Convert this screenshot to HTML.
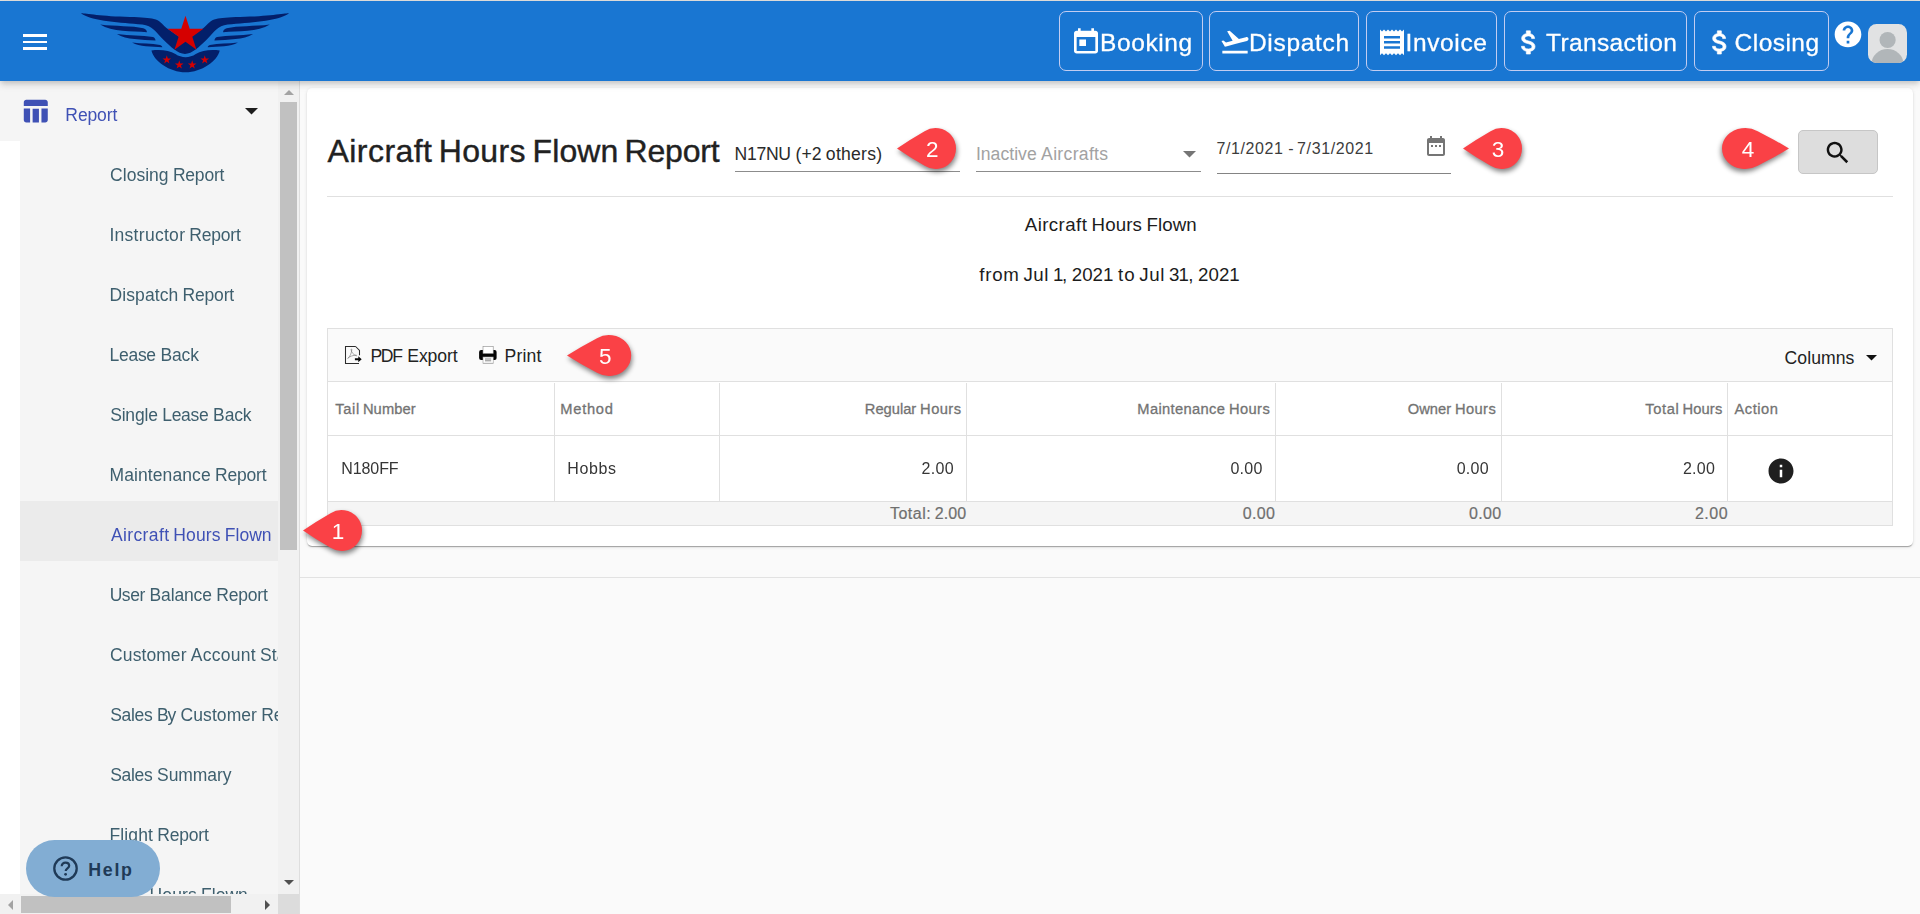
<!DOCTYPE html>
<html lang="en"><head><meta charset="utf-8"><title>Aircraft Hours Flown Report</title>
<style>
html,body{margin:0;padding:0}
body{width:1920px;height:914px;overflow:hidden;position:relative;background:#fafafa;font-family:"Liberation Sans",Arial,sans-serif;}
.a{position:absolute}
.t{position:absolute;white-space:nowrap;display:block}
svg{position:absolute;overflow:visible}
#hdr{left:0;top:1px;width:1920px;height:80px;background:#1976d2;box-shadow:0 2.5px 5px -1px rgba(0,0,0,.12),0 5px 6px 0 rgba(0,0,0,.08),0 1px 12px 0 rgba(0,0,0,.08);z-index:5}
.nb{position:absolute;top:10px;height:58px;border:1px solid #c3cdf1;border-radius:7px}
#side{left:0;top:81px;width:299px;height:833px;background:#f5f5f5;border-right:1px solid #dedede;overflow:hidden;z-index:2}
#card{left:307px;top:88px;width:1606px;height:458px;background:#fff;border-radius:5px;box-shadow:0 1.6px 1px -1px rgba(0,0,0,.2),0 1px 1px 0 rgba(0,0,0,.13),0 1px 3.5px 0 rgba(0,0,0,.12)}
.ul{position:absolute;height:1px;background:#8c8c8c}
.vl{position:absolute;width:1px;background:#e0e0e0;top:383px;height:118px}
</style></head><body>
<div class="a" style="left:0;top:0;width:1920px;height:1px;background:#e4e2df"></div>

<div class="a" style="left:300px;top:577px;width:1620px;height:1px;background:#e2e2e2"></div>
<div id="card" class="a"></div>
<span class="t" style="left:327.54px;top:133px;font-size:32.00px;line-height:36px;color:#212121;letter-spacing:0.442px;-webkit-text-stroke:0.40px #212121;">Aircraft</span> <span class="t" style="left:438.78px;top:133px;font-size:32.00px;line-height:36px;color:#212121;letter-spacing:0.313px;-webkit-text-stroke:0.40px #212121;">Hours</span> <span class="t" style="left:532.58px;top:133px;font-size:32.00px;line-height:36px;color:#212121;letter-spacing:0.094px;-webkit-text-stroke:0.40px #212121;">Flown</span> <span class="t" style="left:624.58px;top:133px;font-size:32.00px;line-height:36px;color:#212121;letter-spacing:-0.203px;-webkit-text-stroke:0.40px #212121;">Report</span>
<span class="t" style="left:734.56px;top:144px;font-size:17.60px;line-height:20px;color:#2a2a2a;letter-spacing:-0.292px;">N17NU</span> <span class="t" style="left:795.49px;top:144px;font-size:17.60px;line-height:20px;color:#2a2a2a;letter-spacing:0.034px;">(+2</span> <span class="t" style="left:825.87px;top:144px;font-size:17.60px;line-height:20px;color:#2a2a2a;letter-spacing:0.241px;">others)</span>
<div class="ul" style="left:735px;top:171px;width:225px"></div>
<span class="t" style="left:975.88px;top:144px;font-size:17.60px;line-height:20px;color:#a2a2a2;letter-spacing:0.030px;">Inactive</span> <span class="t" style="left:1041.08px;top:144px;font-size:17.60px;line-height:20px;color:#a2a2a2;letter-spacing:0.315px;">Aircrafts</span>
<div class="ul" style="left:976px;top:171px;width:225px"></div>
<svg style="left:1183px;top:151px" width="13" height="6.5" viewBox="0 0 12 6"><path d="M0 0h12L6 6z" fill="#757575"/></svg>
<span class="t" style="left:1216.48px;top:140px;font-size:16.00px;line-height:17px;color:#3c3c3c;letter-spacing:0.602px;">7/1/2021</span> <span class="t" style="left:1288.30px;top:140px;font-size:16.00px;line-height:17px;color:#3c3c3c;">-</span> <span class="t" style="left:1297.08px;top:140px;font-size:16.00px;line-height:17px;color:#3c3c3c;letter-spacing:0.613px;">7/31/2021</span>
<div class="ul" style="left:1217px;top:172.5px;width:234px;height:1.25px;background:#848484"></div>
<svg style="left:1424px;top:134.25px" width="24" height="24" viewBox="0 0 24 24"><path fill="#757575" d="M9 11H7v2h2v-2zm4 0h-2v2h2v-2zm4 0h-2v2h2v-2zm2-7h-1V2h-2v2H8V2H6v2H5c-1.11 0-1.99.9-1.99 2L3 20c0 1.1.89 2 2 2h14c1.1 0 2-.9 2-2V6c0-1.1-.9-2-2-2zm0 16H5V9h14v11z"/></svg>
<div class="a" style="left:1798px;top:130px;width:78px;height:42px;background:#dddddd;border:1px solid #c6c6c6;border-radius:5px"></div>
<svg style="left:1822.8px;top:138.3px" width="29.5" height="29.5" viewBox="0 0 24 24"><path fill="#111" d="M15.5 14h-.79l-.28-.27C15.41 12.59 16 11.11 16 9.5 16 5.91 13.09 3 9.5 3S3 5.910 3 9.5 5.91 16 9.5 16c1.61 0 3.09-.59 4.23-1.57l.27.28v.79l5 4.99L20.49 19l-4.99-5zm-6 0C7.01 14 5 11.99 5 9.5S7.01 5 9.5 5 14 7.01 14 9.5 11.990 14 9.5 14z"/></svg>
<div class="a" style="left:327px;top:196px;width:1566px;height:1px;background:#e0e0e0"></div>
<span class="t" style="left:1024.76px;top:214px;font-size:18.70px;line-height:21px;color:#1c1c1c;letter-spacing:0.413px;">Aircraft</span> <span class="t" style="left:1091.52px;top:214px;font-size:18.70px;line-height:21px;color:#1c1c1c;letter-spacing:0.130px;">Hours</span> <span class="t" style="left:1146.57px;top:214px;font-size:18.70px;line-height:21px;color:#1c1c1c;letter-spacing:0.038px;">Flown</span>
<span class="t" style="left:979.24px;top:264px;font-size:18.70px;line-height:21px;color:#1c1c1c;letter-spacing:0.743px;">from</span> <span class="t" style="left:1023.46px;top:264px;font-size:18.70px;line-height:21px;color:#1c1c1c;letter-spacing:0.555px;">Jul</span> <span class="t" style="left:1053.06px;top:264px;font-size:18.70px;line-height:21px;color:#1c1c1c;letter-spacing:-1.495px;">1,</span> <span class="t" style="left:1071.74px;top:264px;font-size:18.70px;line-height:21px;color:#1c1c1c;letter-spacing:0.049px;">2021</span> <span class="t" style="left:1118.08px;top:264px;font-size:18.70px;line-height:21px;color:#1c1c1c;letter-spacing:1.078px;">to</span> <span class="t" style="left:1139.35px;top:264px;font-size:18.70px;line-height:21px;color:#1c1c1c;letter-spacing:0.555px;">Jul</span> <span class="t" style="left:1168.95px;top:264px;font-size:18.70px;line-height:21px;color:#1c1c1c;letter-spacing:-0.733px;">31,</span> <span class="t" style="left:1198.06px;top:264px;font-size:18.70px;line-height:21px;color:#1c1c1c;letter-spacing:0.049px;">2021</span>
<div class="a" style="left:327px;top:328px;width:1564px;height:196px;border:1px solid #e0e0e0;background:#fff"></div>
<div class="a" style="left:328px;top:329px;width:1564px;height:52px;background:#fafafa;border-bottom:1px solid #e0e0e0"></div>
<div class="a" style="left:328px;top:435px;width:1564px;height:1px;background:#e0e0e0"></div>
<div class="a" style="left:328px;top:501px;width:1564px;height:23px;background:#f5f5f5;border-top:1px solid #e0e0e0"></div>
<div class="vl" style="left:554px"></div>
<div class="vl" style="left:719px"></div>
<div class="vl" style="left:966px"></div>
<div class="vl" style="left:1275px"></div>
<div class="vl" style="left:1501px"></div>
<div class="vl" style="left:1727px"></div>
<svg style="left:340px;top:340px" width="30" height="30" viewBox="340 340 30 30"><path d="M355.600 346.500H345.500V363.500H359M355.600 346.500L359.500 350.400V355.300" fill="none" stroke="#2b2b2b" stroke-width="1.050" stroke-linejoin="miter"/><path d="M347.600 358.600C349.800 356.800 351.600 353.300 351.800 349.600C351.900 348.700 351 348.700 351.100 349.600C351.400 352.300 353.400 354.800 356.200 355.700C357 355.900 357 355.200 356.200 355.200C353.300 355.100 350 356.300 347.900 358.200" fill="none" stroke="#7a7a7a" stroke-width=".65"/><path d="M354.900 358.200H358.300V356.200L361.700 359.250L358.300 362.300V360.300H354.900Z" fill="#0a0a0a"/></svg>
<span class="t" style="left:370.56px;top:346px;font-size:17.60px;line-height:20px;color:#222;letter-spacing:-1.414px;">PDF</span> <span class="t" style="left:407.29px;top:346px;font-size:17.60px;line-height:20px;color:#222;letter-spacing:-0.105px;">Export</span>
<svg style="left:478px;top:345px" width="20" height="20" viewBox="478 345 20 20"><rect x="479.1" y="350" width="17.5" height="10" rx="2" fill="#050505"/><rect x="483" y="346.400" width="10.200" height="7.100" fill="#fff" stroke="#8a8a8a" stroke-width=".6"/><rect x="483" y="357" width="10.200" height="6.300" fill="#fff" stroke="#9a9a9a" stroke-width=".6"/><path d="M485 359h6.200M485 360.800h6.200" stroke="#6a6a6a" stroke-width=".8"/><path d="M483 363.300h10.200" stroke="#b5b5b5" stroke-width="1"/></svg>
<span class="t" style="left:504.56px;top:346px;font-size:17.60px;line-height:20px;color:#222;letter-spacing:0.158px;">Print</span>
<span class="t" style="left:1784.62px;top:348px;font-size:17.60px;line-height:20px;color:#222;letter-spacing:0.052px;">Columns</span>
<svg style="left:1866px;top:355px" width="11" height="5.5" viewBox="0 0 12 6"><path d="M0 0h12L6 6z" fill="#111"/></svg>
<span class="t" style="left:335.18px;top:401px;font-size:14.70px;line-height:16px;color:#737373;letter-spacing:0.666px;-webkit-text-stroke:0.30px #737373;">Tail</span> <span class="t" style="left:362.91px;top:401px;font-size:14.70px;line-height:16px;color:#737373;letter-spacing:0.108px;-webkit-text-stroke:0.30px #737373;">Number</span>
<span class="t" style="left:560.29px;top:401px;font-size:14.70px;line-height:16px;color:#737373;letter-spacing:0.724px;-webkit-text-stroke:0.30px #737373;">Method</span>
<span class="t" style="left:864.79px;top:401px;font-size:14.70px;line-height:16px;color:#737373;-webkit-text-stroke:0.30px #737373;">Regular</span> <span class="t" style="left:920.12px;top:401px;font-size:14.70px;line-height:16px;color:#737373;letter-spacing:0.423px;-webkit-text-stroke:0.30px #737373;">Hours</span>
<span class="t" style="left:1137.29px;top:401px;font-size:14.70px;line-height:16px;color:#737373;letter-spacing:0.359px;-webkit-text-stroke:0.30px #737373;">Maintenance</span> <span class="t" style="left:1228.90px;top:401px;font-size:14.70px;line-height:16px;color:#737373;letter-spacing:0.415px;-webkit-text-stroke:0.30px #737373;">Hours</span>
<span class="t" style="left:1407.81px;top:401px;font-size:14.70px;line-height:16px;color:#737373;letter-spacing:0.022px;-webkit-text-stroke:0.30px #737373;">Owner</span> <span class="t" style="left:1455.00px;top:401px;font-size:14.70px;line-height:16px;color:#737373;letter-spacing:0.390px;-webkit-text-stroke:0.30px #737373;">Hours</span>
<span class="t" style="left:1645.18px;top:401px;font-size:14.70px;line-height:16px;color:#737373;letter-spacing:0.661px;-webkit-text-stroke:0.30px #737373;">Total</span> <span class="t" style="left:1682.54px;top:401px;font-size:14.70px;line-height:16px;color:#737373;letter-spacing:0.129px;-webkit-text-stroke:0.30px #737373;">Hours</span>
<span class="t" style="left:1734.47px;top:401px;font-size:14.70px;line-height:16px;color:#737373;letter-spacing:0.524px;-webkit-text-stroke:0.30px #737373;">Action</span>
<div class="a" style="left:0;top:0;will-change:transform">
<span class="t" style="left:341.19px;top:460px;font-size:16.00px;line-height:17px;color:#363636;letter-spacing:-0.068px;">N180FF</span>
<span class="t" style="left:567.19px;top:460px;font-size:16.00px;line-height:17px;color:#363636;letter-spacing:0.658px;">Hobbs</span>
<span class="t" style="left:921.50px;top:460px;font-size:16.00px;line-height:17px;color:#363636;letter-spacing:0.324px;">2.00</span>
<span class="t" style="left:1230.38px;top:460px;font-size:16.00px;line-height:17px;color:#363636;letter-spacing:0.282px;">0.00</span>
<span class="t" style="left:1456.68px;top:460px;font-size:16.00px;line-height:17px;color:#363636;letter-spacing:0.265px;">0.00</span>
<span class="t" style="left:1682.95px;top:460px;font-size:16.00px;line-height:17px;color:#363636;letter-spacing:0.257px;">2.00</span>
</div>
<svg style="left:1766.25px;top:456px" width="30" height="30" viewBox="0 0 24 24"><path fill="#1f1f1f" d="M12 2C6.48 2 2 6.48 2 12s4.480 10 10 10 10-4.480 10-10S17.520 2 12 2zm1 15h-2v-6h2v6zm0-8h-2V7h2v2z"/></svg>
<span class="t" style="left:889.95px;top:505px;font-size:16.00px;line-height:17px;color:#6f6f6f;letter-spacing:0.494px;-webkit-text-stroke:0.20px #6f6f6f;">Total:</span> <span class="t" style="left:934.68px;top:505px;font-size:16.00px;line-height:17px;color:#6f6f6f;letter-spacing:0.098px;-webkit-text-stroke:0.20px #6f6f6f;">2.00</span>
<span class="t" style="left:1242.68px;top:505px;font-size:16.00px;line-height:17px;color:#6f6f6f;letter-spacing:0.349px;-webkit-text-stroke:0.20px #6f6f6f;">0.00</span>
<span class="t" style="left:1468.88px;top:505px;font-size:16.00px;line-height:17px;color:#6f6f6f;letter-spacing:0.399px;-webkit-text-stroke:0.20px #6f6f6f;">0.00</span>
<span class="t" style="left:1694.90px;top:505px;font-size:16.00px;line-height:17px;color:#6f6f6f;letter-spacing:0.524px;-webkit-text-stroke:0.20px #6f6f6f;">2.00</span>
<div id="side" class="a">
<div class="a" style="left:0;top:60px;width:20px;height:753px;background:#fff"></div>
<div class="a" style="left:20px;top:420px;width:258px;height:60px;background:#ebebeb"></div>
</div>
<div class="a" style="left:0;top:81px;width:278px;height:813px;overflow:hidden;z-index:3"><div class="a" style="left:0;top:-81px;width:278px;height:914px;will-change:transform">
<svg style="left:20.2px;top:96.200px" width="30.300" height="30.300" viewBox="0 0 24 24"><path fill="#3f51b5" d="M10 10.020h5V21h-5zM17 21h3c1.100 0 2-.9 2-2v-9h-5v11zm3-18H5c-1.100 0-2 .9-2 2v3h19V5c0-1.100-.9-2-2-2zM3 19c0 1.100.9 2 2 2h3V10H3v9z"/></svg>
<span class="t" style="left:65.36px;top:105px;font-size:17.50px;line-height:20px;color:#3f51b5;letter-spacing:-0.116px;">Report</span>
<svg style="left:245px;top:108px" width="13" height="6.5" viewBox="0 0 12 6"><path d="M0 0h12L6 6z" fill="#1d1d1d"/></svg>
<span class="t" style="left:110.12px;top:165px;font-size:17.50px;line-height:20px;color:#3e5f6e;letter-spacing:0.011px;">Closing</span> <span class="t" style="left:172.89px;top:165px;font-size:17.50px;line-height:20px;color:#3e5f6e;letter-spacing:-0.197px;">Report</span>
<span class="t" style="left:109.39px;top:225px;font-size:17.50px;line-height:20px;color:#3e5f6e;letter-spacing:0.294px;">Instructor</span> <span class="t" style="left:189.32px;top:225px;font-size:17.50px;line-height:20px;color:#3e5f6e;letter-spacing:-0.197px;">Report</span>
<span class="t" style="left:109.56px;top:285px;font-size:17.50px;line-height:20px;color:#3e5f6e;letter-spacing:0.084px;">Dispatch</span> <span class="t" style="left:182.58px;top:285px;font-size:17.50px;line-height:20px;color:#3e5f6e;letter-spacing:-0.197px;">Report</span>
<span class="t" style="left:109.56px;top:345px;font-size:17.50px;line-height:20px;color:#3e5f6e;letter-spacing:-0.282px;">Lease</span> <span class="t" style="left:160.46px;top:345px;font-size:17.50px;line-height:20px;color:#3e5f6e;letter-spacing:-0.140px;">Back</span>
<span class="t" style="left:110.21px;top:405px;font-size:17.50px;line-height:20px;color:#3e5f6e;letter-spacing:-0.195px;">Single</span> <span class="t" style="left:162.23px;top:405px;font-size:17.50px;line-height:20px;color:#3e5f6e;letter-spacing:-0.282px;">Lease</span> <span class="t" style="left:213.12px;top:405px;font-size:17.50px;line-height:20px;color:#3e5f6e;letter-spacing:-0.140px;">Back</span>
<span class="t" style="left:109.56px;top:465px;font-size:17.50px;line-height:20px;color:#3e5f6e;letter-spacing:0.086px;">Maintenance</span> <span class="t" style="left:214.97px;top:465px;font-size:17.50px;line-height:20px;color:#3e5f6e;letter-spacing:-0.197px;">Report</span>
<span class="t" style="left:110.97px;top:525px;font-size:17.50px;line-height:20px;color:#3f51b5;letter-spacing:0.374px;">Aircraft</span> <span class="t" style="left:173.35px;top:525px;font-size:17.50px;line-height:20px;color:#3f51b5;letter-spacing:0.105px;">Hours</span> <span class="t" style="left:224.79px;top:525px;font-size:17.50px;line-height:20px;color:#3f51b5;letter-spacing:0.019px;">Flown</span>
<span class="t" style="left:109.65px;top:585px;font-size:17.50px;line-height:20px;color:#3e5f6e;letter-spacing:-0.449px;">User</span> <span class="t" style="left:149.59px;top:585px;font-size:17.50px;line-height:20px;color:#3e5f6e;letter-spacing:-0.151px;">Balance</span> <span class="t" style="left:216.27px;top:585px;font-size:17.50px;line-height:20px;color:#3e5f6e;letter-spacing:-0.197px;">Report</span>
<span class="t" style="left:110.12px;top:645px;font-size:17.50px;line-height:20px;color:#3e5f6e;letter-spacing:0.074px;">Customer</span> <span class="t" style="left:190.84px;top:645px;font-size:17.50px;line-height:20px;color:#3e5f6e;letter-spacing:0.263px;">Account</span> <span class="t" style="left:259.99px;top:645px;font-size:17.50px;line-height:20px;color:#3e5f6e;letter-spacing:0.114px;">Statement</span>
<span class="t" style="left:110.21px;top:705px;font-size:17.50px;line-height:20px;color:#3e5f6e;letter-spacing:-0.322px;">Sales</span> <span class="t" style="left:157.04px;top:705px;font-size:17.50px;line-height:20px;color:#3e5f6e;letter-spacing:-1.227px;">By</span> <span class="t" style="left:180.57px;top:705px;font-size:17.50px;line-height:20px;color:#3e5f6e;letter-spacing:0.074px;">Customer</span> <span class="t" style="left:261.29px;top:705px;font-size:17.50px;line-height:20px;color:#3e5f6e;letter-spacing:-0.197px;">Report</span>
<span class="t" style="left:110.21px;top:765px;font-size:17.50px;line-height:20px;color:#3e5f6e;letter-spacing:-0.322px;">Sales</span> <span class="t" style="left:157.04px;top:765px;font-size:17.50px;line-height:20px;color:#3e5f6e;letter-spacing:-0.060px;">Summary</span>
<span class="t" style="left:109.56px;top:825px;font-size:17.50px;line-height:20px;color:#3e5f6e;letter-spacing:0.119px;">Flight</span> <span class="t" style="left:157.29px;top:825px;font-size:17.50px;line-height:20px;color:#3e5f6e;letter-spacing:-0.197px;">Report</span>
<span class="t" style="left:109.65px;top:885px;font-size:17.50px;line-height:20px;color:#3e5f6e;letter-spacing:-0.449px;">User</span> <span class="t" style="left:149.59px;top:885px;font-size:17.50px;line-height:20px;color:#3e5f6e;letter-spacing:0.105px;">Hours</span> <span class="t" style="left:201.03px;top:885px;font-size:17.50px;line-height:20px;color:#3e5f6e;letter-spacing:0.019px;">Flown</span>
</div></div>
<div class="a" style="left:278px;top:81px;width:21px;height:813px;background:#f1f1f1;z-index:3"></div>
<div class="a" style="left:280px;top:102px;width:17px;height:448px;background:#c1c1c1;z-index:3"></div>
<svg style="left:283.5px;top:90px;z-index:3" width="10" height="5" viewBox="0 0 10 5"><path d="M0 5h10L5 0z" fill="#a3a3a3"/></svg>
<svg style="left:283.5px;top:880px;z-index:3" width="10" height="5" viewBox="0 0 10 5"><path d="M0 0h10L5 5z" fill="#505050"/></svg>
<div class="a" style="left:0;top:894px;width:278px;height:20px;background:#f1f1f1;z-index:3"></div>
<div class="a" style="left:21px;top:896px;width:210px;height:17px;background:#c1c1c1;z-index:3"></div>
<svg style="left:8px;top:899.5px;z-index:3" width="5" height="10" viewBox="0 0 5 10"><path d="M5 0v10L0 5z" fill="#a3a3a3"/></svg>
<svg style="left:265px;top:899.5px;z-index:3" width="5" height="10" viewBox="0 0 5 10"><path d="M0 0v10L5 5z" fill="#505050"/></svg>
<div class="a" style="left:278px;top:894px;width:21px;height:20px;background:#dcdcdc;z-index:3"></div>
<div class="a" style="left:26px;top:840px;width:134px;height:57px;border-radius:29px;background:#82add3;z-index:6"></div>
<svg style="left:53px;top:856px;z-index:6" width="25" height="25" viewBox="0 0 25 25"><circle cx="12.5" cy="12.5" r="11.200" fill="none" stroke="#1f3a57" stroke-width="2.300"/><path d="M8.700 10.200c0-2.200 1.700-3.600 3.800-3.600s3.700 1.300 3.700 3.200c0 2.600-3.500 2.700-3.500 5.300" fill="none" stroke="#1f3a57" stroke-width="2.200"/><circle cx="12.600" cy="18.300" r="1.400" fill="#1f3a57"/></svg>
<span class="t z6" style="left:88.23px;top:860px;font-size:17.80px;line-height:20px;color:#1f3a57;letter-spacing:1.744px;font-weight:700;">Help</span>
<div id="hdr" class="a">
<div class="a" style="left:23px;top:33px;width:24px;height:2.700px;background:#fff"></div><div class="a" style="left:23px;top:39.700px;width:24px;height:2.700px;background:#fff"></div><div class="a" style="left:23px;top:46.300px;width:24px;height:2.700px;background:#fff"></div>
<svg style="left:70px;top:4px" width="230" height="75" viewBox="0 0 1920 626"><g fill="#031f6a"><path d="M93 70C110 66 250 96 500 100C600 102 660 108 700 116C748 126 768 156 808 194L962 300L962 408C898 408 845 354 780 291C710 221 690 173 604 163C420 143 200 140 93 70Z"/>
<path d="M252 163C380 180 520 172 612 194C634 200 642 215 642 227C520 215 350 228 252 163Z"/>
<path d="M392 241C500 258 600 248 692 268C707 273 714 285 714 297C600 285 470 292 392 241Z"/>
<path d="M518 313C600 325 680 318 752 333C764 336 770 345 770 352C680 345 580 352 518 313Z"/><g transform="translate(1920,0) scale(-1,1)"><path d="M93 70C110 66 250 96 500 100C600 102 660 108 700 116C748 126 768 156 808 194L962 300L962 408C898 408 845 354 780 291C710 221 690 173 604 163C420 143 200 140 93 70Z"/>
<path d="M252 163C380 180 520 172 612 194C634 200 642 215 642 227C520 215 350 228 252 163Z"/>
<path d="M392 241C500 258 600 248 692 268C707 273 714 285 714 297C600 285 470 292 392 241Z"/>
<path d="M518 313C600 325 680 318 752 333C764 336 770 345 770 352C680 345 580 352 518 313Z"/></g><path d="M680 380C760 370 830 380 880 410C930 445 1000 445 1050 410C1100 380 1170 370 1250 380C1230 470 1100 560 965 562C830 560 700 470 680 380Z"/></g><g fill="#d50000"><polygon points="964.0,89.0 999.3,197.5 1113.3,197.5 1021.0,264.5 1056.3,373.0 964.0,306.0 871.7,373.0 907.0,264.5 814.7,197.5 928.7,197.5"/><polygon points="808.0,420.0 816.5,446.3 844.1,446.3 821.8,462.5 830.3,488.7 808.0,472.5 785.7,488.7 794.2,462.5 771.9,446.3 799.5,446.3"/><polygon points="912.0,462.0 920.5,488.3 948.1,488.3 925.8,504.5 934.3,530.7 912.0,514.5 889.7,530.7 898.2,504.5 875.9,488.3 903.5,488.3"/><polygon points="1020.0,462.0 1028.5,488.3 1056.1,488.3 1033.8,504.5 1042.3,530.7 1020.0,514.5 997.7,530.7 1006.2,504.5 983.9,488.3 1011.5,488.3"/><polygon points="1125.0,420.0 1133.5,446.3 1161.1,446.3 1138.8,462.5 1147.3,488.7 1125.0,472.5 1102.7,488.7 1111.2,462.5 1088.9,446.3 1116.5,446.3"/></g></svg>
<div class="nb" style="left:1059px;width:142px"></div>
<div class="nb" style="left:1209px;width:148px"></div>
<div class="nb" style="left:1366px;width:129px"></div>
<div class="nb" style="left:1504px;width:181px"></div>
<div class="nb" style="left:1694px;width:133px"></div>
<svg style="left:1069.75px;top:25.70px" width="32" height="30.3" viewBox="0 0 24 24" preserveAspectRatio="none"><path fill="#fff" stroke="#fff" stroke-width="0" d="M19 3h-1V1h-2v2H8V1H6v2H5c-1.110 0-1.990.9-1.990 2L3 19c0 1.100.890 2 2 2h14c1.100 0 2-.9 2-2V5c0-1.100-.9-2-2-2zm0 16H5V8h14v11zM7 10h5v5H7z"/></svg>
<svg style="left:1219.20px;top:25.20px" width="32" height="31.3" viewBox="0 0 24 24" preserveAspectRatio="none"><path fill="#fff" stroke="#fff" stroke-width="0" d="M2.500 19h19v2h-19zm19.570-9.360c-.21-.8-1.040-1.280-1.840-1.060L14.920 10l-6.900-6.430-1.930.51 4.140 7.170-4.970 1.330-1.970-1.540-1.450.39 1.820 3.160.77 1.330 1.600-.43 5.310-1.420 4.350-1.160L21 11.490c.81-.23 1.280-1.050 1.070-1.850z"/></svg>
<svg style="left:1376.00px;top:25.65px" width="32" height="30.7" viewBox="0 0 24 24" preserveAspectRatio="none"><path fill="#fff" stroke="#fff" stroke-width="0" d="M18 17H6v-2h12v2zm0-4H6v-2h12v2zm0-4H6V7h12v2zM3 22l1.500-1.500L6 22l1.500-1.500L9 22l1.500-1.500L12 22l1.500-1.500L15 22l1.500-1.500L18 22l1.500-1.500L21 22V2l-1.500 1.500L18 2l-1.500 1.500L15 2l-1.500 1.500L12 2l-1.500 1.500L9 2 7.500 3.500 6 2 4.500 3.500 3 2v20z"/></svg>
<svg style="left:1513.30px;top:25.70px" width="32" height="30.9" viewBox="0 0 24 24" preserveAspectRatio="none"><path fill="#fff" stroke="#fff" stroke-width="0.5" d="M11.800 10.900c-2.270-.59-3-1.200-3-2.150 0-1.090 1.010-1.850 2.700-1.850 1.780 0 2.440.85 2.500 2.100h2.210c-.07-1.720-1.120-3.300-3.210-3.810V3h-3v2.160c-1.940.42-3.500 1.680-3.500 3.610 0 2.310 1.910 3.460 4.700 4.130 2.500.6 3 1.480 3 2.410 0 .69-.49 1.790-2.700 1.790-2.060 0-2.870-.92-2.980-2.100h-2.200c.12 2.190 1.760 3.420 3.680 3.830V21h3v-2.150c1.950-.37 3.500-1.500 3.500-3.550 0-2.840-2.430-3.810-4.700-4.400z"/></svg>
<svg style="left:1703.50px;top:25.70px" width="32" height="30.9" viewBox="0 0 24 24" preserveAspectRatio="none"><path fill="#fff" stroke="#fff" stroke-width="0.5" d="M11.800 10.900c-2.270-.59-3-1.200-3-2.150 0-1.090 1.010-1.850 2.700-1.850 1.780 0 2.440.85 2.500 2.100h2.210c-.07-1.720-1.120-3.300-3.210-3.810V3h-3v2.160c-1.940.42-3.500 1.680-3.500 3.610 0 2.310 1.910 3.460 4.700 4.130 2.500.6 3 1.480 3 2.410 0 .69-.49 1.790-2.700 1.790-2.060 0-2.870-.92-2.980-2.100h-2.200c.12 2.190 1.760 3.420 3.680 3.830V21h3v-2.150c1.950-.37 3.500-1.500 3.500-3.550 0-2.840-2.430-3.810-4.700-4.400z"/></svg>
<svg style="left:1831.60px;top:17.70px" width="32" height="30.8" viewBox="0 0 24 24" preserveAspectRatio="none"><path fill="#fff" stroke="#fff" stroke-width="0" d="M12 2C6.480 2 2 6.480 2 12s4.480 10 10 10 10-4.480 10-10S17.520 2 12 2zm1 17h-2v-2h2v2zm2.070-7.750l-.9.92C13.450 12.900 13 13.500 13 15h-2v-.5c0-1.100.45-2.100 1.170-2.830l1.240-1.260c.37-.36.59-.86.59-1.410 0-1.100-.9-2-2-2s-2 .9-2 2H8c0-2.210 1.790-4 4-4s4 1.790 4 4c0 .88-.36 1.680-.93 2.250z"/></svg>
<svg style="left:1868px;top:23px" width="39" height="39" viewBox="0 0 39 39"><defs><clipPath id="av"><rect width="39" height="39" rx="8.500"/></clipPath></defs><g clip-path="url(#av)"><rect width="39" height="39" fill="#e1e2e3"/><circle cx="19.600" cy="16" r="8.100" fill="#b1b6b9"/><ellipse cx="19.500" cy="40" rx="16" ry="15" fill="#b1b6b9"/></g></svg>
</div>
<div class="a" style="left:0;top:0;z-index:6;will-change:transform">
<span class="t" style="left:1099.99px;top:29px;font-size:24.50px;line-height:27px;color:#fff;letter-spacing:0.606px;-webkit-text-stroke:0.30px #fff;">Booking</span>
<span class="t" style="left:1248.99px;top:29px;font-size:24.50px;line-height:27px;color:#fff;letter-spacing:0.682px;-webkit-text-stroke:0.30px #fff;">Dispatch</span>
<span class="t" style="left:1405.55px;top:29px;font-size:24.50px;line-height:27px;color:#fff;letter-spacing:0.619px;-webkit-text-stroke:0.30px #fff;">Invoice</span>
<span class="t" style="left:1545.96px;top:29px;font-size:24.50px;line-height:27px;color:#fff;letter-spacing:0.373px;-webkit-text-stroke:0.30px #fff;">Transaction</span>
<span class="t" style="left:1734.58px;top:29px;font-size:24.50px;line-height:27px;color:#fff;letter-spacing:0.464px;-webkit-text-stroke:0.30px #fff;">Closing</span>
</div>
<svg style="left:0;top:0;z-index:7" width="1920" height="914"><g style="filter:drop-shadow(1.5px 3px 2.5px rgba(0,0,0,.48))"><path d="M0 0Q13.12 -9.10 27.58 -17.35A20.5 20.5 0 1 1 27.58 17.35Q13.12 9.10 0 0Z" fill="#fa4146" transform="translate(303.00 530.50) scale(1.0000 1)"/></g></svg>
<span class="t z7" style="left:331.73px;top:519px;font-size:22.50px;line-height:25px;color:#fff;">1</span>
<svg style="left:0;top:0;z-index:7" width="1920" height="914"><g style="filter:drop-shadow(1.5px 3px 2.5px rgba(0,0,0,.48))"><path d="M0 0Q13.12 -9.10 27.58 -17.35A20.5 20.5 0 1 1 27.58 17.35Q13.12 9.10 0 0Z" fill="#fa4146" transform="translate(897.00 148.50) scale(1.0000 1)"/></g></svg>
<span class="t z7" style="left:926.04px;top:137px;font-size:22.50px;line-height:25px;color:#fff;">2</span>
<svg style="left:0;top:0;z-index:7" width="1920" height="914"><g style="filter:drop-shadow(1.5px 3px 2.5px rgba(0,0,0,.48))"><path d="M0 0Q13.12 -9.10 27.58 -17.35A20.5 20.5 0 1 1 27.58 17.35Q13.12 9.10 0 0Z" fill="#fa4146" transform="translate(1463.00 148.50) scale(1.0000 1)"/></g></svg>
<span class="t z7" style="left:1491.80px;top:137px;font-size:22.50px;line-height:25px;color:#fff;">3</span>
<svg style="left:0;top:0;z-index:7" width="1920" height="914"><g style="filter:drop-shadow(-1px 3px 2.5px rgba(0,0,0,.48))"><path d="M0 0Q13.12 -9.10 27.58 -17.35A20.5 20.5 0 1 1 27.58 17.35Q13.12 9.10 0 0Z" fill="#fa4146" transform="translate(1789.00 148.50) scale(-1.1356 1)"/></g></svg>
<span class="t z7" style="left:1741.82px;top:137px;font-size:22.50px;line-height:25px;color:#fff;">4</span>
<svg style="left:0;top:0;z-index:7" width="1920" height="914"><g style="filter:drop-shadow(1.5px 3px 2.5px rgba(0,0,0,.48))"><path d="M0 0Q13.12 -9.10 27.58 -17.35A20.5 20.5 0 1 1 27.58 17.35Q13.12 9.10 0 0Z" fill="#fa4146" transform="translate(567.00 355.50) scale(1.0881 1)"/></g></svg>
<span class="t z7" style="left:599.06px;top:344px;font-size:22.50px;line-height:25px;color:#fff;">5</span>
<style>.z6{z-index:6}.z7{z-index:7}</style>
</body></html>
